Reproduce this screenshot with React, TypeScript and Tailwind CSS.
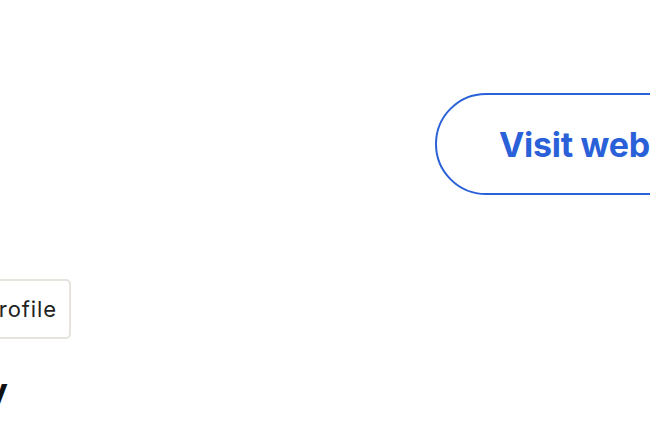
import React from "react";

export default function App() {
  return (
    <div
      className="w-[650px] h-[433px] overflow-hidden bg-white"
      style={{ fontFamily: 'Inter, "Liberation Sans", Arial, sans-serif' }}
    >
      <div className="flex pt-[93px] pl-[435px]">
        <button className="shrink-0 h-[102px] rounded-full border-2 border-[#2a61d8] pl-[62px] pr-[62px] text-[34px] font-bold text-[#2a61d8] whitespace-nowrap flex items-center tracking-[-0.3px]">
          Visit website
        </button>
      </div>
      <div className="flex w-[71px] justify-end mt-[84px]">
        <button className="shrink-0 h-[60px] rounded-[5px] border-2 border-[#e6e4dc] pl-[14px] pr-[12px] text-[22px] text-[#222222] whitespace-nowrap flex items-center tracking-[0.9px]">
          View profile
        </button>
      </div>
      <div className="flex w-[8px] justify-end mt-[34px]">
        <h2 className="shrink-0 text-[36px] leading-none font-bold text-[#111111] whitespace-nowrap">
          Company
        </h2>
      </div>
    </div>
  );
}
